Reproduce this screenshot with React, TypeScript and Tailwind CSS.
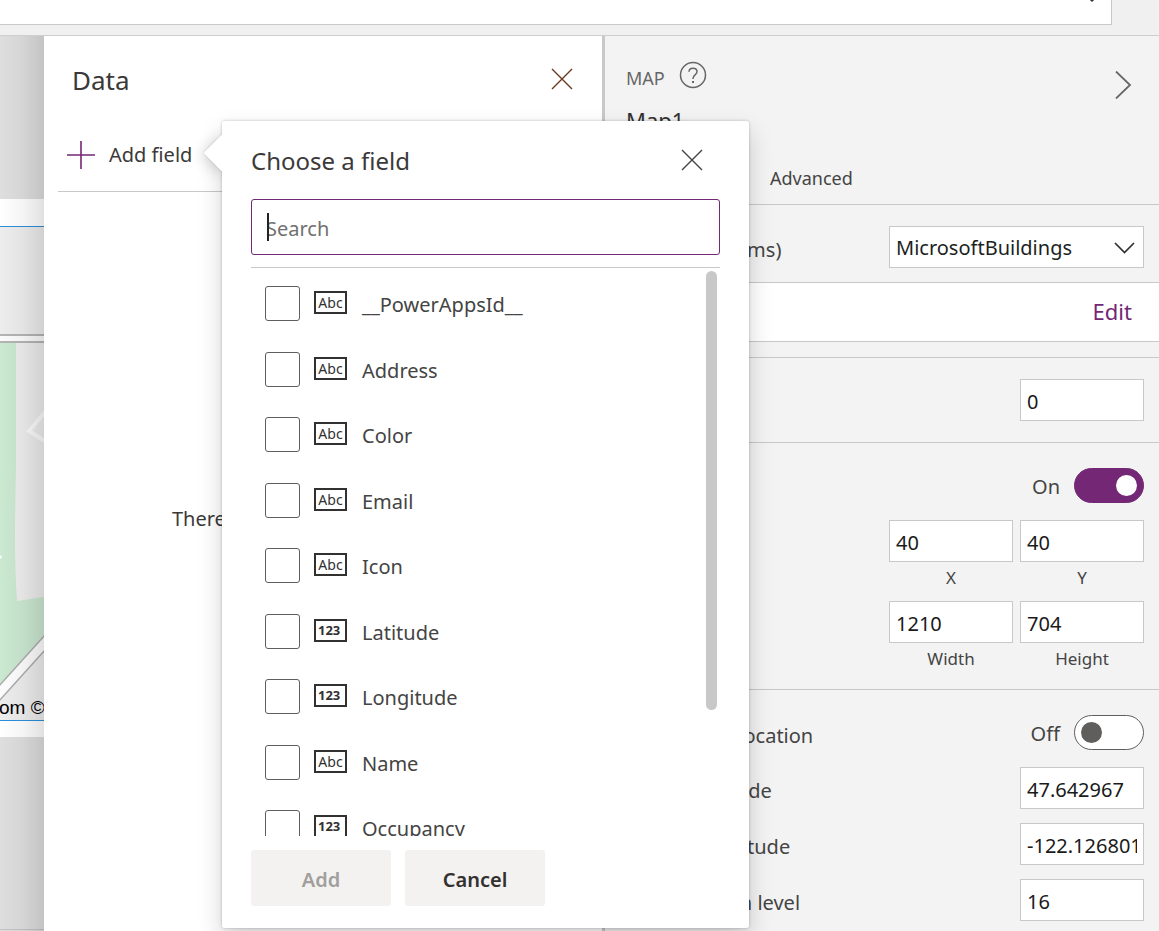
import { useState, type ReactNode } from "react";

type FieldKind = "Abc" | "123";

const FIELDS: { name: string; kind: FieldKind }[] = [
  { name: "__PowerAppsId__", kind: "Abc" },
  { name: "Address", kind: "Abc" },
  { name: "Color", kind: "Abc" },
  { name: "Email", kind: "Abc" },
  { name: "Icon", kind: "Abc" },
  { name: "Latitude", kind: "123" },
  { name: "Longitude", kind: "123" },
  { name: "Name", kind: "Abc" },
  { name: "Occupancy", kind: "123" },
];

function CrossIcon() {
  return (
    <svg width="22" height="22" viewBox="0 0 22 22" fill="none" stroke="currentColor" strokeWidth="1.4" aria-hidden="true">
      <path d="M1 1 21 21M21 1 1 21" />
    </svg>
  );
}

function FormulaBar() {
  return (
    <header className="flex h-9 shrink-0 items-start border-b border-[#cfcfcf] bg-[#f0f0f0]">
      <div className="mr-[47px] flex h-[25px] flex-1 justify-end border-r border-b border-[#c8c8c8] bg-white pr-3.5">
        <svg width="10" height="3" viewBox="0 0 10 3" fill="none" stroke="#333" strokeWidth="1.5" aria-hidden="true">
          <path d="M2 -2 5 1 8 -2" />
        </svg>
      </div>
    </header>
  );
}

function MapCanvas() {
  return (
    <div className="relative flex w-11 shrink-0 flex-col overflow-hidden bg-[#dedede]">
      <div className="mt-[163px] bg-white pt-[27px] pb-4">
        <div className="relative h-[495px] overflow-hidden border-y border-[#2b8fdc] bg-[#ededed]">
          <svg className="block" width="44" height="493" viewBox="0 0 44 493" fill="none" aria-hidden="true">
            <path d="M0 116H16V240C15 290 14 330 17 374L44 370V412L0 462Z" fill="#cbe8d1" />
            <path d="M0 111.5H44" stroke="#b4b4b4" strokeWidth="9" />
            <path d="M0 111.5H44" stroke="#fbfbfb" strokeWidth="5" />
            <path d="M46 184 29 204 46 215" stroke="#fbfbfb" strokeWidth="4" />
            <path d="M44 416 0 466V493H44Z" fill="#ededed" />
            <path d="M50 410 -6 472" stroke="#adadad" strokeWidth="11.5" />
            <path d="M50 410 -6 472" stroke="#fdfdfd" strokeWidth="8.5" />
            <path d="M0 328 2 330 0 332Z" fill="#fff" />
          </svg>
          <p className="absolute bottom-0 -left-px font-['Liberation_Sans',sans-serif] text-[19px] leading-6 whitespace-nowrap text-black">
            om ©
          </p>
        </div>
      </div>
      <div className="mb-px flex-1 border-b border-[#c4c4c4]" />
      <div className="absolute inset-0 bg-linear-to-r from-black/0 via-black/4 to-black/12" />
    </div>
  );
}

function FieldRow({ name, kind }: { name: string; kind: FieldKind }) {
  return (
    <li className="odd:h-[66px] even:h-[65px]">
      <label className="flex items-start pt-4 pl-3.5">
        <input
          type="checkbox"
          className="size-[35px] shrink-0 appearance-none rounded-[3px] border border-[#605e5c] bg-white checked:bg-[#742774]"
        />
        <span
          className={
            kind === "Abc"
              ? "mt-[5px] ml-3.5 flex h-[23px] w-[33px] items-center justify-center border-2 border-[#323130] text-[14px] leading-none text-[#323130]"
              : "mt-[5px] ml-3.5 flex h-[23px] w-[33px] items-center border-2 border-[#323130] pl-0.5 text-[13px] leading-none font-bold text-[#323130]"
          }
          aria-hidden="true"
        >
          {kind}
        </span>
        <span className="mt-[5px] ml-[15px] text-[20px] leading-7 text-[#444]">{name}</span>
      </label>
    </li>
  );
}

function ChooseField() {
  return (
    <div role="dialog" aria-labelledby="choose-title" className="absolute top-[85px] left-[178px] z-10 w-[527px]">
      <div className="absolute top-[19px] -left-[13px] size-[26px] rotate-45 bg-white shadow-[0_0_2px_rgba(0,0,0,0.2),0_4px_14px_rgba(0,0,0,0.16)]" />
      <div className="absolute inset-0 rounded-[3px] shadow-[0_0_3px_rgba(0,0,0,0.25),0_11px_25px_rgba(0,0,0,0.18)]" />
      <div className="relative rounded-[3px] bg-white px-[29px] pt-6 pb-[22px]">
        <div className="absolute top-[19px] -left-[13px] size-[26px] rotate-45 bg-white" />
        <div className="relative flex items-start justify-between pr-[17px]">
          <h2 id="choose-title" className="text-[24px] leading-8 text-[#3b3a39]">
            Choose a field
          </h2>
          <button type="button" aria-label="Close" className="mt-1 text-[#444]">
            <CrossIcon />
          </button>
        </div>
        <div className="relative mt-[22px]">
          <input
            type="text"
            aria-label="Search"
            placeholder="Search"
            className="block h-14 w-full rounded-[3px] border border-[#742774] px-3.5 pt-0.5 text-[20px] caret-transparent outline-none placeholder:text-[#707070]"
          />
          <span className="absolute top-3.5 left-4 h-7 w-0.5 bg-[#222]" />
        </div>
        <div className="relative mt-3 border-t border-[#c8c8c8]">
          <ul className="h-[568px] overflow-y-auto pt-0.5 [scrollbar-width:none]">
            {FIELDS.map((field) => (
              <FieldRow key={field.name} name={field.name} kind={field.kind} />
            ))}
          </ul>
          <span className="absolute top-[3px] right-[3px] h-[439px] w-[11px] rounded-full bg-[#c8c8c8]" />
        </div>
        <div className="mt-3.5 flex gap-3.5">
          <button type="button" disabled className="h-14 w-[140px] rounded-[3px] bg-[#f3f2f1] pt-1 text-[20px] font-semibold text-[#a19f9d]">
            Add
          </button>
          <button type="button" className="h-14 w-[140px] rounded-[3px] bg-[#f3f2f1] pt-1 text-[20px] font-semibold text-[#323130]">
            Cancel
          </button>
        </div>
      </div>
    </div>
  );
}

function DataPanel() {
  return (
    <section className="relative w-[561px] shrink-0 border-r-[3px] border-[#c8c8c8] bg-white">
      <div className="flex items-center justify-between pt-6 pr-[29px] pl-7">
        <h1 className="pt-0.5 text-[26px] leading-9 text-[#3b3a39]">Data</h1>
        <button type="button" aria-label="Close" className="text-[#6b3a1e]">
          <CrossIcon />
        </button>
      </div>
      <div className="mx-3.5 mt-[30px] border-b border-[#c8c8c8] pb-[10px] pl-[9px]">
        <button type="button" className="flex items-center gap-3.5 text-[20px] leading-[53px] text-[#3b3a39]">
          <svg width="28" height="28" viewBox="0 0 28 28" stroke="#742774" strokeWidth="1.6" aria-hidden="true">
            <path d="M14 0V28M0 14H28" />
          </svg>
          Add field
        </button>
      </div>
      <p className="mt-[313px] w-[178px] overflow-hidden pl-32 text-[20px] leading-7 whitespace-nowrap text-[#3b3a39]">There</p>
      <ChooseField />
    </section>
  );
}

function ValueInput({ id, value }: { id: string; value: string }) {
  return (
    <input
      id={id}
      type="text"
      defaultValue={value}
      className="block h-[42px] w-[124px] border border-[#c8c8c8] bg-white px-1.5 pt-0.5 text-[20px] text-[#1a1a1a] outline-none"
    />
  );
}

function PropertyRow({ id, label, children }: { id: string; label: string; children: ReactNode }) {
  return (
    <div className="flex items-center justify-between">
      <label htmlFor={id} className="pt-1.5 text-[20px] leading-7 text-[#444]">
        {label}
      </label>
      {children}
    </div>
  );
}

function Toggle({ id, initial }: { id: string; initial: boolean }) {
  const [on, setOn] = useState(initial);
  return (
    <div className="flex h-[35px] items-center gap-3.5">
      <span className="pt-0.5 text-[20px] leading-7 text-[#444]">{on ? "On" : "Off"}</span>
      <button
        id={id}
        type="button"
        role="switch"
        aria-checked={on}
        onClick={() => setOn(!on)}
        className={
          on
            ? "flex h-[35px] w-[70px] items-center justify-end rounded-full border border-[#742774] bg-[#742774] px-1.5"
            : "flex h-[35px] w-[70px] items-center rounded-full border border-[#605e5c] bg-white px-1.5"
        }
      >
        <span className={on ? "size-[21px] rounded-full bg-white" : "size-[21px] rounded-full bg-[#605e5c]"} />
      </button>
    </div>
  );
}

function Measure({ id, label, value }: { id: string; label: string; value: string }) {
  return (
    <div className="flex flex-col">
      <ValueInput id={id} value={value} />
      <label htmlFor={id} className="text-center text-[17px] leading-8 text-[#444]">
        {label}
      </label>
    </div>
  );
}

function PropertiesPanel() {
  return (
    <aside className="min-w-0 flex-1 bg-[#f3f3f3]">
      <div className="flex h-[169px] flex-col justify-between border-b border-[#c8c8c8] pr-6 pl-[21px]">
        <div className="flex items-start justify-between pt-[25px]">
          <div>
            <div className="flex items-start gap-3.5">
              <span className="pt-[3px] text-[18px] leading-7 text-[#666]">MAP</span>
              <svg width="28" height="28" viewBox="0 0 28 28" fill="none" stroke="#666" strokeWidth="1.5" aria-hidden="true">
                <circle cx="14" cy="14" r="12.5" />
                <path d="M10 10.8C10 8.6 11.6 7.2 14 7.2S18 8.6 18 10.7C18 13.8 14 14 14 17.4V18" />
                <path d="M14 20V22" strokeWidth="2" />
              </svg>
            </div>
            <p className="mt-3 text-[22px] leading-8 text-[#323130]">Map1</p>
          </div>
          <button type="button" aria-label="Collapse" className="mt-2.5">
            <svg width="22" height="28" viewBox="0 0 22 28" fill="none" stroke="#666" strokeWidth="1.8" aria-hidden="true">
              <path d="M3 0.5 17 14 3 27.5" />
            </svg>
          </button>
        </div>
        <nav className="flex pb-3 text-[18px] leading-7 text-[#444]">
          <a href="#properties" className="w-36">
            Properties
          </a>
          <a href="#advanced">Advanced</a>
        </nav>
      </div>

      <div className="border-b border-[#c8c8c8] pt-[21px] pr-[15px] pb-3.5 pl-[21px]">
        <PropertyRow id="items" label="Locations(Items)">
          <div className="relative">
            <select
              id="items"
              className="block h-[42px] w-[255px] appearance-none border border-[#c8c8c8] bg-white px-1.5 pt-0.5 text-[20px] text-[#201f1e] outline-none"
            >
              <option>MicrosoftBuildings</option>
            </select>
            <svg
              className="pointer-events-none absolute top-4 right-2"
              width="22"
              height="13"
              viewBox="0 0 22 13"
              fill="none"
              stroke="#323130"
              strokeWidth="1.7"
              aria-hidden="true"
            >
              <path d="M1 1 10.5 10.5 20 1" />
            </svg>
          </div>
        </PropertyRow>
      </div>

      <div className="flex h-[59px] items-center justify-between border-b border-[#c8c8c8] bg-white pr-[27px] pb-0.5 pl-[21px] text-[20px]">
        <span className="text-[#444]">Fields</span>
        <button type="button" className="text-[22px] text-[#742774]">
          Edit
        </button>
      </div>
      <div className="h-4 border-b border-[#c8c8c8]" />

      <div className="border-b border-[#c8c8c8] py-[21px] pr-[15px] pl-[21px]">
        <PropertyRow id="tab-index" label="Tab index">
          <ValueInput id="tab-index" value="0" />
        </PropertyRow>
      </div>

      <div className="border-b border-[#c8c8c8] pt-[25px] pr-[15px] pb-3.5 pl-[21px]">
        <PropertyRow id="visible" label="Visible">
          <Toggle id="visible" initial={true} />
        </PropertyRow>
        <div className="mt-[17px] flex flex-col gap-[7px]">
          <div className="flex justify-between">
            <span className="text-[20px] leading-[42px] text-[#444]">Position</span>
            <div className="flex gap-[7px]">
              <Measure id="x" label="X" value="40" />
              <Measure id="y" label="Y" value="40" />
            </div>
          </div>
          <div className="flex justify-between">
            <span className="text-[20px] leading-[42px] text-[#444]">Size</span>
            <div className="flex gap-[7px]">
              <Measure id="width" label="Width" value="1210" />
              <Measure id="height" label="Height" value="704" />
            </div>
          </div>
        </div>
      </div>

      <div className="pt-[25px] pr-[15px] pl-[21px]">
        <PropertyRow id="default-location" label="Use default location">
          <Toggle id="default-location" initial={false} />
        </PropertyRow>
        <div className="mt-[17px] flex flex-col gap-3.5">
          <PropertyRow id="latitude" label="Default latitude">
            <ValueInput id="latitude" value="47.642967" />
          </PropertyRow>
          <PropertyRow id="longitude" label="Default longitude">
            <ValueInput id="longitude" value="-122.126801" />
          </PropertyRow>
          <PropertyRow id="zoom" label="Default zoom level">
            <ValueInput id="zoom" value="16" />
          </PropertyRow>
        </div>
      </div>
    </aside>
  );
}

export default function App() {
  return (
    <div className="flex min-h-screen flex-col overflow-hidden bg-[#f3f3f3] font-['Noto_Sans',sans-serif]">
      <FormulaBar />
      <main className="flex flex-1">
        <MapCanvas />
        <DataPanel />
        <PropertiesPanel />
      </main>
    </div>
  );
}
